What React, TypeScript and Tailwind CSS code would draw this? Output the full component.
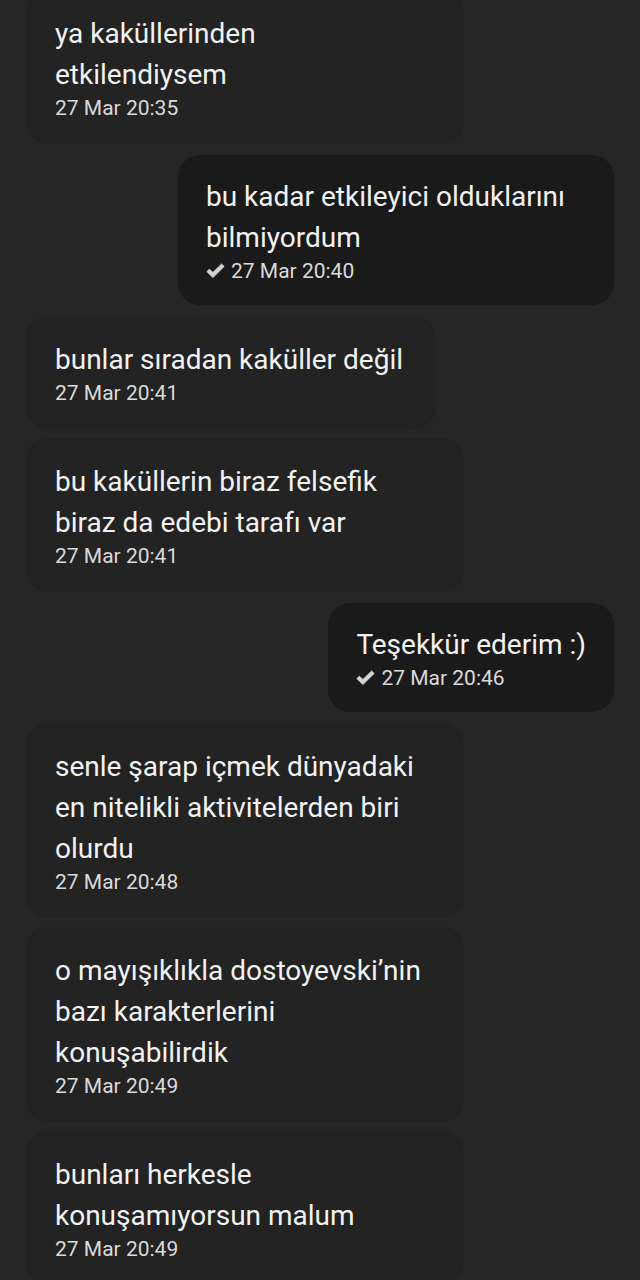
type Msg = { text: string; time: string; out?: boolean };

const MESSAGES: Msg[] = [
  { text: "ya kaküllerinden etkilendiysem", time: "27 Mar 20:35" },
  { text: "bu kadar etkileyici olduklarını bilmiyordum", time: "27 Mar 20:40", out: true },
  { text: "bunlar sıradan kaküller değil", time: "27 Mar 20:41" },
  { text: "bu kaküllerin biraz felsefik biraz da edebi tarafı var", time: "27 Mar 20:41" },
  { text: "Teşekkür ederim :)", time: "27 Mar 20:46", out: true },
  { text: "senle şarap içmek dünyadaki en nitelikli aktivitelerden biri olurdu", time: "27 Mar 20:48" },
  { text: "o mayışıklıkla dostoyevski’nin bazı karakterlerini konuşabilirdik", time: "27 Mar 20:49" },
  { text: "bunları herkesle konuşamıyorsun malum", time: "27 Mar 20:49" },
];

function Check() {
  return (
    <svg width="19" height="16" viewBox="0 0 19 16" className="mr-[6px] shrink-0">
      <path
        d="M0.8 8.6 L3.4 6.2 L6.9 9.4 L15.6 0.9 L18.2 3.4 L6.9 14.6 Z"
        fill="#d4d4d4"
        stroke="#d4d4d4"
        strokeWidth="0.8"
        strokeLinejoin="round"
      />
    </svg>
  );
}

function Bubble({ m }: { m: Msg }) {
  return (
    <div className={m.out ? "flex justify-end" : "flex justify-start"}>
      <div
        className={
          m.out
            ? "max-w-[436px] rounded-[22px] bg-[#1a1a1a] pl-[28px] pr-[28px] pt-[21px] pb-[21px]"
            : "max-w-[434px] rounded-[20px] bg-[#232323] pl-[27px] pr-[31px] pt-[21px] pb-[21px] shadow-[0_0_3px_rgba(0,0,0,0.35)]"
        }
      >
        <p className="text-[28px] leading-[41px] text-[#f2f2f2]">{m.text}</p>
        <div className="flex items-center text-[21px] leading-[26px] text-[#dadada]">
          {m.out ? <Check /> : null}
          {m.time}
        </div>
      </div>
    </div>
  );
}

export default function App() {
  return (
    <div
      className="h-[1280px] w-[640px] overflow-hidden bg-[#262626]"
      style={{ fontFamily: "Roboto, 'Noto Sans', sans-serif" }}
    >
      <div className="-mt-[8px] flex flex-col gap-[13px] pl-[28px] pr-[26px]">
        {MESSAGES.map((m, i) => (
          <Bubble key={i} m={m} />
        ))}
      </div>
    </div>
  );
}
